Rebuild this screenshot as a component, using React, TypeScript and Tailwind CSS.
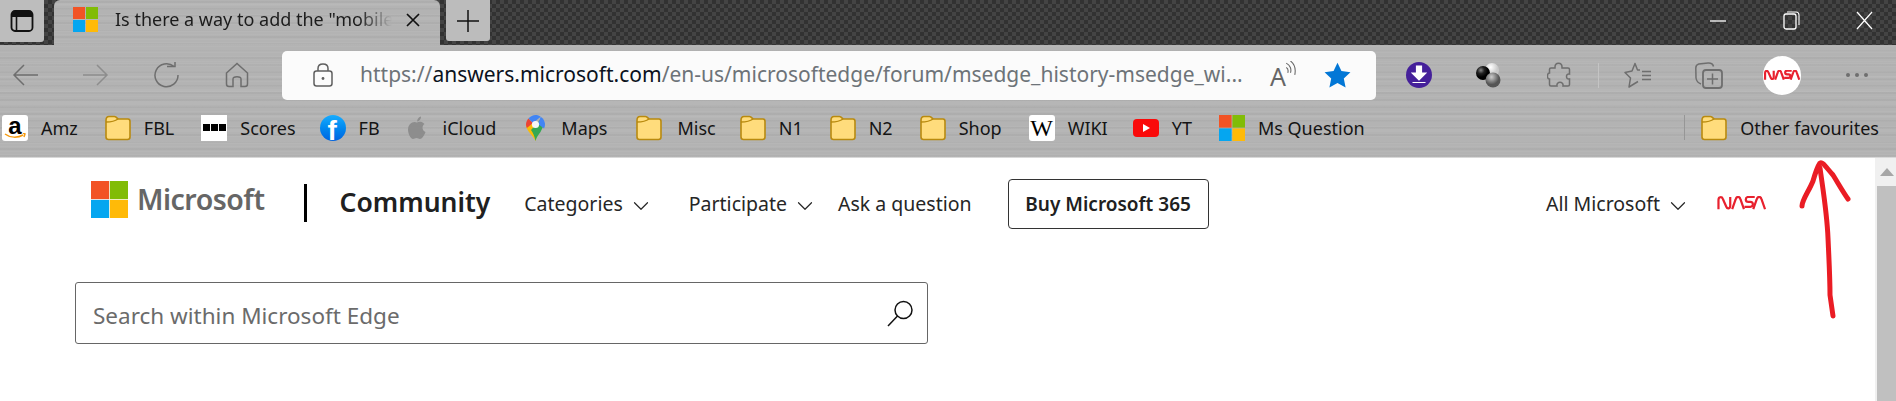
import React from 'react';
import { ChevronDown } from 'lucide-react';

const silver =
  'bg-[#b3b3b3] [background-image:repeating-linear-gradient(0deg,rgba(255,255,255,0.035)_0px,rgba(255,255,255,0.035)_1px,transparent_1px,transparent_5px),repeating-linear-gradient(0deg,rgba(0,0,0,0.03)_0px,rgba(0,0,0,0.03)_2px,transparent_2px,transparent_7px),repeating-linear-gradient(0deg,rgba(255,255,255,0.04)_0px,rgba(255,255,255,0.04)_3px,transparent_3px,transparent_13px)]';
const carbon =
  'bg-[#3a3a3a] [background-image:repeating-conic-gradient(#444444_0_25%,#323232_0_50%)] [background-size:8px_8px]';

const MsLogo = ({ size, gap }: { size: number; gap: number }) => (
  <svg width={size} height={size} viewBox="0 0 100 100" className="shrink-0">
    <rect x="0" y="0" width={50 - gap} height={50 - gap} fill="#f25325" />
    <rect x={50 + gap} y="0" width={50 - gap} height={50 - gap} fill="#81bc06" />
    <rect x="0" y={50 + gap} width={50 - gap} height={50 - gap} fill="#05a6f0" />
    <rect x={50 + gap} y={50 + gap} width={50 - gap} height={50 - gap} fill="#ffba08" />
  </svg>
);

const Folder = () => (
  <svg width="26" height="26" viewBox="0 0 26 26" className="shrink-0">
    <path d="M1 5.500C1 3 2 1.500 4 1.500h5.500c1.500 0 2.500 1.500 3.500 2.500h10c1.500 0 2 1 2 2.500V22c0 1.500-1 2.500-2.500 2.500h-19C2 24.500 1 23.500 1 22z" fill="#ffdc7c" stroke="#b98a0f" strokeWidth="1.600" />
    <path d="M1 7c3 0 8 0 12-3" fill="none" stroke="#b98a0f" strokeWidth="1.400" />
  </svg>
);

const NasaWorm = ({ width, color = '#e8212e', sw = 4.500 }: { width: number; color?: string; sw?: number }) => (
  <svg width={width} viewBox="0 0 100 28" className="shrink-0">
    <g fill="none" stroke={color} strokeWidth={sw} strokeLinejoin="round" strokeLinecap="butt">
      <path d="M3 27V8c0-7 7-7 9-2l7 16c2 5 8 4 8-2V2" />
      <path d="M31 27l7-20c2-7 8-7 10 0l7 20" />
      <path d="M56 22h12c7 0 7-10 0-10h-4c-7 0-7-10 0-10h13" />
      <path d="M74 27l7-20c2-7 8-7 10 0l7 20" />
    </g>
  </svg>
);

const Amazon = () => (
  <span className="relative flex h-[26px] w-[26px] shrink-0 items-start justify-center rounded-[3px] bg-white">
    <span className="font-['Liberation_Sans',sans-serif] text-[24px] leading-[22px] font-bold text-black">a</span>
    <svg width="22" height="7" viewBox="0 0 22 7" className="absolute bottom-[1px] left-[2px]">
      <path d="M1 1c5 4 13 4 18 1M19 0l2 1-1 3" fill="none" stroke="#f59b12" strokeWidth="1.500" />
    </svg>
  </span>
);

const Scores = () => (
  <span className="flex h-[26px] w-[26px] shrink-0 items-center justify-center gap-[1px] bg-white">
    <span className="h-[7px] w-[7px] bg-black" />
    <span className="h-[7px] w-[7px] bg-black" />
    <span className="h-[7px] w-[7px] bg-black" />
  </span>
);

const Facebook = () => (
  <span className="relative block h-[26px] w-[26px] shrink-0 rounded-full bg-gradient-to-b from-[#18acfe] to-[#0163e0]">
    <span className="absolute left-[8px] top-[3px] font-['Liberation_Sans',sans-serif] text-[28px] leading-[26px] font-bold text-white">f</span>
  </span>
);

const Apple = () => (
  <svg width="18" height="24" viewBox="0 0 18 24" className="shrink-0">
    <path d="M9 6.500C10.500 5.500 14 5 16.500 8 13.500 10 14 14.500 17.500 16 16 20 14 23 12 23c-1.500 0-2-1-3.500-1S6.500 23 5 23C2.500 23 0 17.500 0 13.500 0 8 5 4.500 9 6.500z" fill="#8d8d8d" />
    <path d="M9 5.500C9 3 11 .8 13 .5c.2 2.500-1.500 4.800-4 5z" fill="#8d8d8d" />
  </svg>
);

const Maps = () => (
  <svg width="25" height="26" viewBox="0 0 25 26" className="shrink-0">
    <path d="M12.500 26C10 20 3 16 3 9.500L8 7l9 10c-2 3-3.500 5-4.500 9z" fill="#fbbc04" />
    <path d="M12.500 26c1-4 3-6.500 5-9l4-8.500L17 5 8 15c2 3 3.500 6 4.500 11z" fill="#34a853" />
    <path d="M3 9.500C3 7 4 5 5.500 3.500L10 8 3.900 13C3.300 12 3 10.800 3 9.500z" fill="#ea4335" />
    <path d="M5.500 3.500C7.500 1.200 10 0 12.500 0c2 0 3.800.6 5.200 1.700L10 8z" fill="#4285f4" />
    <path d="M17.700 1.700C20.300 3.500 22 6.300 22 9.500c0 1.500-.4 2.800-1 4L15 9z" fill="#4285f4" />
    <circle cx="12.500" cy="9.500" r="3.600" fill="#f6f6f6" />
  </svg>
);

const Wiki = () => (
  <span className="flex h-[26px] w-[26px] shrink-0 items-center justify-center rounded-[3px] bg-white font-['Liberation_Serif',serif] text-[24px] leading-none text-black">W</span>
);

const YouTube = () => (
  <span className="flex h-[18px] w-[26px] shrink-0 items-center justify-center rounded-[4px] bg-[#fa0a0a]">
    <svg width="10" height="10" viewBox="0 0 10 10">
      <path d="M2 1l7 4-7 4z" fill="white" />
    </svg>
  </span>
);

const bookmarks: { icon: React.ReactNode; label: string; extra?: string }[] = [
  { icon: <Amazon />, label: 'Amz' },
  { icon: <Folder />, label: 'FBL' },
  { icon: <Scores />, label: 'Scores' },
  { icon: <Facebook />, label: 'FB', extra: '-ml-[3px]' },
  { icon: <Apple />, label: 'iCloud', extra: 'ml-[1px] gap-[17px]' },
  { icon: <Maps />, label: 'Maps', extra: 'gap-[10px]' },
  { icon: <Folder />, label: 'Misc', extra: 'ml-[2px] -mr-[3px] gap-[15px]' },
  { icon: <Folder />, label: 'N1' },
  { icon: <Folder />, label: 'N2' },
  { icon: <Folder />, label: 'Shop' },
  { icon: <Wiki />, label: 'WIKI' },
  { icon: <YouTube />, label: 'YT', extra: '-ml-[2px]' },
  { icon: <MsLogo size={26} gap={1.5} />, label: 'Ms Question', extra: 'gap-[12px]' },
];

const Bookmark = ({ icon, label, extra = '' }: { icon: React.ReactNode; label: string; extra?: string }) => (
  <div className={`flex items-center gap-[13px] ${extra}`}>
    {icon}
    <span className="text-[18px] leading-[26px] text-[#141414]">{label}</span>
  </div>
);

const TitleBar = () => (
  <div className={`flex h-[45px] items-start ${carbon}`}>
    <div className="flex h-[42px] w-[44px] items-center justify-center rounded-br-[3px] bg-[#bdbdbd]">
      <svg width="24" height="24" viewBox="0 0 24 24">
        <rect x="1.500" y="2" width="21" height="20" rx="3.500" fill="none" stroke="#111" strokeWidth="1.800" />
        <path d="M2 3h20v5H2z" fill="#111" />
        <path d="M6.500 7v14" stroke="#111" strokeWidth="1.600" />
      </svg>
    </div>
    <div className={`ml-[10px] flex h-[45px] w-[386px] items-center rounded-t-[6px] pb-[6px] pl-[19px] ${silver}`}>
      <MsLogo size={25} gap={2} />
      <span className="ml-[17px] w-[277px] overflow-hidden text-[18px] whitespace-nowrap text-[#1c1c1c] [mask-image:linear-gradient(90deg,black_88%,transparent)]">
        Is there a way to add the "mobile" view
      </span>
      <svg width="16" height="16" viewBox="0 0 16 16" className="ml-[13px]">
        <path d="M2 2l12 12M14 2L2 14" stroke="#111" strokeWidth="1.700" />
      </svg>
    </div>
    <div className="ml-[6px] flex h-[41px] w-[44px] items-center justify-center rounded-b-[3px] bg-[#bcbcbc]">
      <svg width="24" height="24" viewBox="0 0 24 24">
        <path d="M12 1v22M1 12h22" stroke="#111" strokeWidth="1.500" />
      </svg>
    </div>
    <div className="ml-auto flex h-[41px] items-center pr-[23px] text-white">
      <svg width="16" height="2" viewBox="0 0 16 2" className="mr-[57px]">
        <path d="M0 1h16" stroke="white" strokeWidth="1.300" />
      </svg>
      <svg width="17" height="19" viewBox="0 0 17 19" className="mr-[56px]">
        <rect x="1" y="3" width="12" height="15" rx="2" fill="none" stroke="white" strokeWidth="1.300" />
        <path d="M4 1h9c2 0 3 1 3 3v10" fill="none" stroke="white" strokeWidth="1.100" />
      </svg>
      <svg width="17" height="19" viewBox="0 0 17 19">
        <path d="M1 1l15 17M16 1L1 18" stroke="white" strokeWidth="1.200" />
      </svg>
    </div>
  </div>
);

const Toolbar = () => (
  <div className="flex h-[55px] items-center pb-[1px] pt-[6px] text-[#6a6a6a]">
    <svg width="27" height="24" viewBox="0 0 27 24" className="ml-[12px]">
      <path d="M26 12H2M12 2L2 12l10 10" fill="none" stroke="#6e6e6e" strokeWidth="1.500" />
    </svg>
    <svg width="27" height="24" viewBox="0 0 27 24" className="ml-[43px]">
      <path d="M1 12h24M15 2l10 10-10 10" fill="none" stroke="#8d8d8d" strokeWidth="1.500" />
    </svg>
    <svg width="27" height="26" viewBox="0 0 27 26" className="ml-[44px]">
      <path d="M21 4.500A11.500 11.500 0 1 0 25 13" fill="none" stroke="#6e6e6e" strokeWidth="1.500" />
      <path d="M14 4.500h8V-2" fill="none" stroke="#6e6e6e" strokeWidth="1.500" />
    </svg>
    <svg width="24" height="26" viewBox="0 0 24 26" className="ml-[45px]">
      <path d="M1.500 11L12 1.500 22.500 11v11c0 1.500-1 2.500-2.500 2.500h-4V17c0-3-8-3-8 0v7.500H4C2.500 24.500 1.500 23.500 1.500 22z" fill="none" stroke="#6e6e6e" strokeWidth="1.500" />
    </svg>
    <div className="ml-[33px] flex h-[49px] w-[1094px] items-center rounded-[5px] bg-[#fbfbfb] pl-[31px]">
      <svg width="20" height="24" viewBox="0 0 20 24" className="shrink-0">
        <rect x="1" y="8" width="18" height="15" rx="2.500" fill="none" stroke="#5f5f5f" strokeWidth="1.500" />
        <path d="M5 8V5.500C5 2.500 7 1 10 1s5 1.500 5 4.500V8" fill="none" stroke="#5f5f5f" strokeWidth="1.500" />
        <circle cx="10" cy="15.500" r="1.400" fill="#5f5f5f" />
      </svg>
      <span className="ml-[27px] w-[880px] text-[21px] whitespace-nowrap text-[#6d7378]">
        https://<span className="text-[#0b1220]">answers.microsoft.com</span>/en-us/microsoftedge/forum/msedge_history-msedge_wi...
      </span>
      <span className="relative ml-[30px] h-[28px] w-[26px] shrink-0 text-[#666]">
        <span className="absolute left-0 top-0 text-[25px] leading-[30px]">A</span>
        <svg width="11" height="15" viewBox="0 0 10 14" className="absolute right-0 top-0">
          <path d="M1 2c4 2 5 6 4 9M1 6c2 1 2 3 1.500 5M5 0c4 3 5 8 4 13" fill="none" stroke="#666" strokeWidth="1" />
        </svg>
      </span>
      <svg width="27" height="26" viewBox="0 0 24 23" className="ml-[28px] shrink-0">
        <path d="M12 0.500l3.500 7.500 8 1-5.900 5.500 1.600 8.200L12 18.600l-7.200 4.100 1.600-8.200L.5 9l8-1z" fill="#0277d6" />
      </svg>
    </div>
    <span className="relative ml-[30px] flex h-[26px] w-[26px] items-center justify-center rounded-full bg-[#45209a]">
      <svg width="16" height="20" viewBox="0 0 16 20">
        <path d="M5.500 1h5v7H15l-7 7-7-7h4.500zM1.500 17.500h13" fill="white" stroke="white" strokeWidth="1.200" />
      </svg>
    </span>
    <svg width="26" height="26" viewBox="0 0 26 26" className="ml-[43px]">
      <defs>
        <radialGradient id="w" cx="0.400" cy="0.300"><stop offset="0" stopColor="#fff" /><stop offset="1" stopColor="#c9c9c9" /></radialGradient>
        <radialGradient id="k" cx="0.350" cy="0.300"><stop offset="0" stopColor="#888" /><stop offset="0.500" stopColor="#222" /><stop offset="1" stopColor="#000" /></radialGradient>
        <radialGradient id="g" cx="0.400" cy="0.300"><stop offset="0" stopColor="#ccc" /><stop offset="1" stopColor="#555" /></radialGradient>
      </defs>
      <circle cx="17" cy="8" r="7" fill="url(#w)" />
      <circle cx="8" cy="11" r="7" fill="url(#k)" />
      <circle cx="18" cy="18" r="7.500" fill="url(#g)" />
    </svg>
    <svg width="24" height="26" viewBox="0 0 24 26" className="ml-[46px]">
      <path d="M8 5c0-5 7-5 7 0v1h6c1 0 1.500.5 1.500 1.500V12c-4-1-4 6 0 5v5.500c0 1-.5 1.500-1.500 1.500h-5c1-5-7-5-6 0H4c-1 0-1.500-.5-1.500-1.500V17c-3 0-2.500-6 0-6V7.500C2.500 6.500 3 6 4 6h4z" fill="none" stroke="#6e6e6e" strokeWidth="1.500" />
    </svg>
    <span className="ml-[27px] h-[25px] w-[1px] bg-[#c4c4c4]" />
    <svg width="27" height="26" viewBox="0 0 27 26" className="ml-[25px]">
      <path d="M16 8h-2.500L11 1.500 8 9 1 10.500 6.500 16 5 25l9-5.500" fill="none" stroke="#6e6e6e" strokeWidth="1.500" strokeLinejoin="round" />
      <path d="M18 9.500h9M18 13.500h9M18 17.500h9" stroke="#6e6e6e" strokeWidth="1.500" />
    </svg>
    <svg width="28" height="27" viewBox="0 0 28 27" className="ml-[44px]">
      <path d="M6 22C3 21 1.500 19 1 16L.8 6c0-2 1-3.500 3-4L13 1c3-.2 5 1 5.500 3.500" fill="none" stroke="#6e6e6e" strokeWidth="1.500" />
      <rect x="8" y="8" width="19" height="18" rx="3" fill="none" stroke="#6e6e6e" strokeWidth="1.800" />
      <path d="M17.500 11.500v11M12 17h11" stroke="#6e6e6e" strokeWidth="1.500" />
    </svg>
    <span className="ml-[40px] flex h-[39px] w-[38px] items-center justify-center rounded-full bg-white">
      <NasaWorm width={36} sw={6} />
    </span>
    <span className="ml-[45px] flex gap-[5px]">
      <span className="h-[4px] w-[4px] rounded-full bg-[#6e6e6e]" />
      <span className="h-[4px] w-[4px] rounded-full bg-[#6e6e6e]" />
      <span className="h-[4px] w-[4px] rounded-full bg-[#6e6e6e]" />
    </span>
  </div>
);

const BookmarksBar = () => (
  <div className="flex h-[57px] items-center pb-[2px] pl-[2px] pr-[17px]">
    <div className="flex items-center gap-[27px]">
      {bookmarks.map((b) => (
        <Bookmark key={b.label} icon={b.icon} label={b.label} extra={b.extra} />
      ))}
    </div>
    <div className="ml-auto flex items-center">
      <span className="mr-[16px] h-[25px] w-[1px] bg-[#969696]" />
      <Bookmark icon={<Folder />} label="Other favourites" />
    </div>
  </div>
);

const NavItem = ({ label, chevron = true }: { label: string; chevron?: boolean }) => (
  <div className="flex items-center gap-[5px] text-[19.5px] text-[#262626]">
    <span>{label}</span>
    {chevron && <ChevronDown size={26} strokeWidth={1.100} className="mt-[4px]" />}
  </div>
);

const Page = () => (
  <div className="flex h-[243px]">
    <div className="relative flex-1">
      <header className="flex items-start pl-[91px] pt-[23px]">
        <MsLogo size={37} gap={1} />
        <span className="ml-[9px] text-[28.5px] leading-[37px] font-semibold tracking-[-0.5px] text-[#666]">Microsoft</span>
        <span className="ml-[39px] mt-[3px] h-[38px] w-[3px] bg-black" />
        <span className="ml-[33px] mt-[1px] text-[26.5px] leading-[40px] font-semibold text-[#202020]">Community</span>
        <div className="ml-[34px] mt-[10px] flex h-[26px] items-center">
          <NavItem label="Categories" />
          <div className="ml-[35px]"><NavItem label="Participate" /></div>
          <div className="ml-[20px]"><NavItem label="Ask a question" chevron={false} /></div>
        </div>
        <div className="ml-[36px] -mt-[2px] flex h-[50px] w-[201px] items-center justify-center rounded-[4px] border border-[#333] text-[19px] font-semibold text-[#202020]">
          Buy Microsoft 365
        </div>
        <div className="ml-auto mr-[109px] mt-[10px] flex h-[26px] items-center">
          <NavItem label="All Microsoft" />
          <div className="ml-[26px] -mt-[2px]"><NasaWorm width={49} sw={4.500} /></div>
        </div>
      </header>
      <div className="ml-[75px] mt-[53px] flex h-[62px] w-[853px] items-center justify-between rounded-[3px] border border-[#666] pl-[17px] pr-[13px]">
        <span className="pt-[5px] text-[22.5px] text-[#6b6b6b]">Search within Microsoft Edge</span>
        <svg width="27" height="27" viewBox="0 0 27 27">
          <circle cx="16.500" cy="10" r="8.500" fill="none" stroke="#111" strokeWidth="1.500" />
          <path d="M10.500 16L1 26" stroke="#111" strokeWidth="1.500" />
        </svg>
      </div>
      {/* red annotation arrow */}
      <svg width="70" height="170" viewBox="0 0 70 170" className="absolute left-[1795px] top-0">
        <path d="M7 48c0-6 7-15 11-25 2-7 5-15 7-18 3-1 5 3 13 12 5 8 10 17 15 24M25 10c3 22 7 45 8 70 1 22 2 40 2 57l3 21" fill="none" stroke="#ea1c24" strokeWidth="5" strokeLinecap="round" strokeLinejoin="round" />
      </svg>
    </div>
    <div className="flex w-[21px] flex-col bg-[#f0f0f0] pl-[2px]">
      <div className="flex h-[28px] items-center justify-center">
        <svg width="14" height="8" viewBox="0 0 14 8"><path d="M7 0l7 8H0z" fill="#a6a6a6" /></svg>
      </div>
      <div className="flex-1 bg-[#c0c0c0]" />
    </div>
  </div>
);

export default function App() {
  return (
    <div className="h-[401px] w-full overflow-hidden bg-white font-['Noto_Sans',sans-serif]">
      <TitleBar />
      <div className={silver}>
        <Toolbar />
        <BookmarksBar />
      </div>
      <div className="h-[1px] bg-[#d8d8d8]" />
      <Page />
    </div>
  );
}
